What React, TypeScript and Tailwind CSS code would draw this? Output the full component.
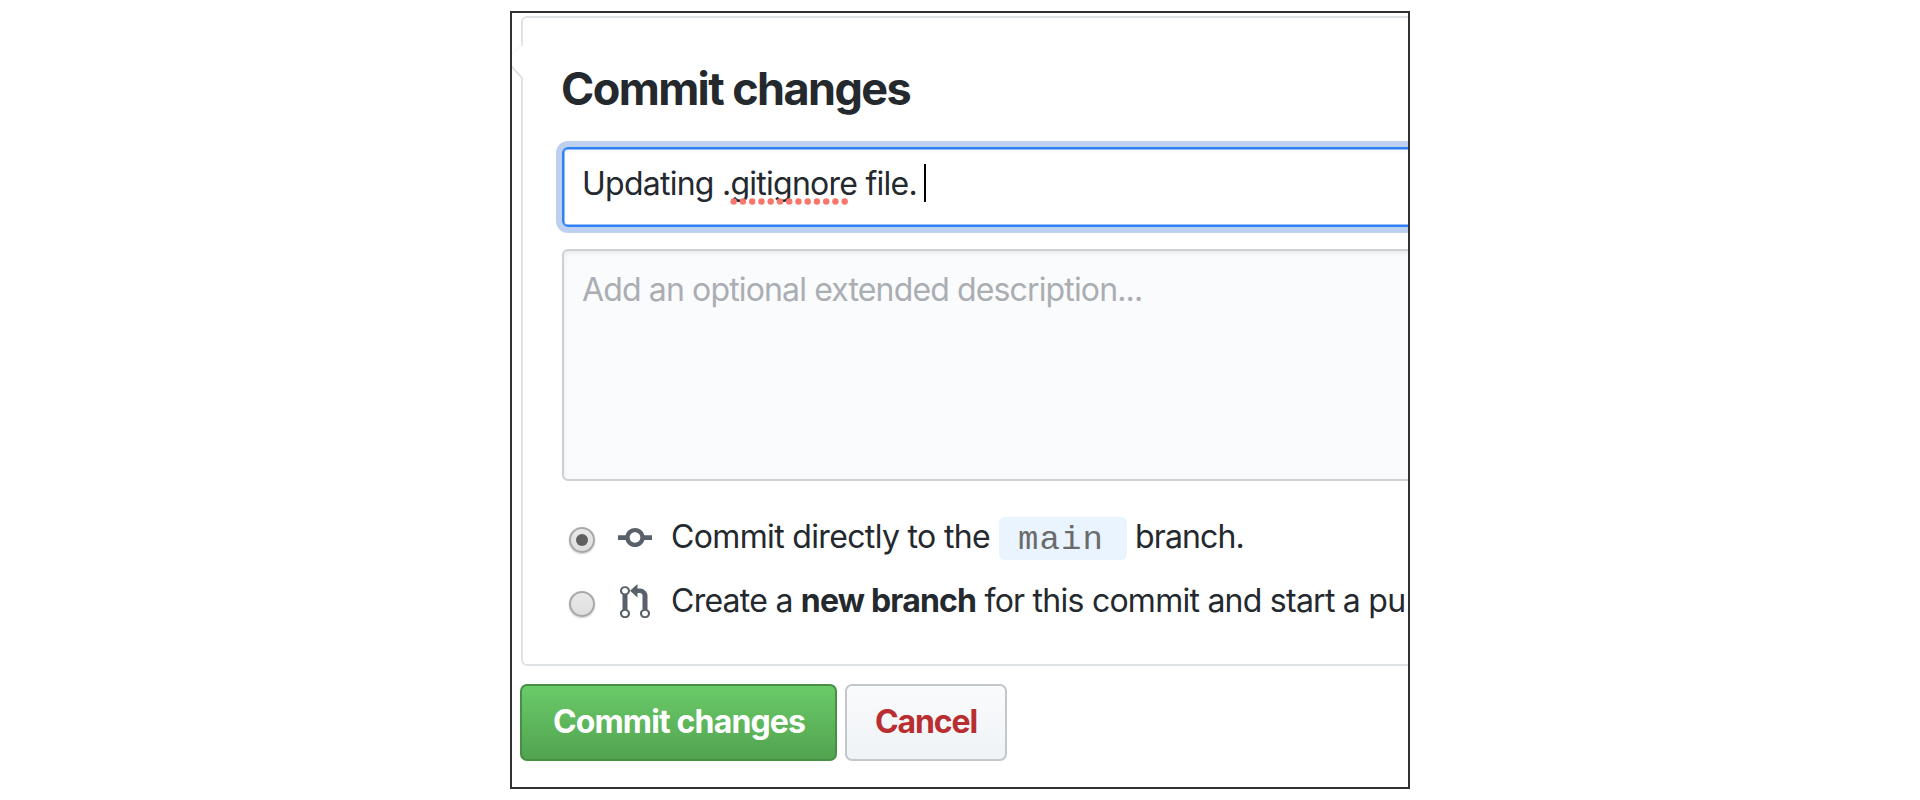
import React from "react";

function CommitIcon() {
  return (
    <svg className="block h-[19px] w-[34px]" viewBox="0 4 14 8" preserveAspectRatio="none" fill="#586069">
      <path d="M10.86 7c-.45-1.72-2-3-3.86-3-1.86 0-3.41 1.28-3.86 3H0v2h3.14c.45 1.72 2 3 3.86 3 1.86 0 3.41-1.28 3.86-3H14V7h-3.14zM7 10.2c-1.22 0-2.2-.98-2.2-2.2 0-1.22.98-2.2 2.2-2.2 1.22 0 2.2.98 2.2 2.2 0 1.22-.98 2.2-2.2 2.2z" />
    </svg>
  );
}

function PullRequestIcon() {
  return (
    <svg className="block h-[34px] w-[30px]" viewBox="0 0 12 15" preserveAspectRatio="none" fill="#586069">
      <path d="M11 11.28V5c-.03-.78-.34-1.47-.94-2.06C9.46 2.35 8.78 2.03 8 2H7V0L4 3l3 3V4h1c.27.02.48.11.69.31.21.2.3.42.31.69v6.28A1.993 1.993 0 0 0 10 15a1.993 1.993 0 0 0 1-3.72zm-1 2.92c-.66 0-1.2-.55-1.2-1.2 0-.65.55-1.2 1.2-1.2.65 0 1.2.55 1.2 1.2 0 .65-.55 1.2-1.2 1.2zM4 3c0-1.11-.89-2-2-2a1.993 1.993 0 0 0-1 3.72v6.56A1.993 1.993 0 0 0 2 15a1.993 1.993 0 0 0 1-3.72V4.72c.59-.34 1-.98 1-1.72zm-.8 10c0 .66-.55 1.2-1.2 1.2-.65 0-1.2-.55-1.2-1.2 0-.65.55-1.2 1.2-1.2.65 0 1.2.55 1.2 1.2zM2 4.2C1.34 4.2.8 3.65.8 3c0-.65.55-1.2 1.2-1.2.65 0 1.2.55 1.2 1.2 0 .65-.55 1.2-1.2 1.2z" />
    </svg>
  );
}

function Radio({ checked = false }: { checked?: boolean }) {
  return (
    <span className="mt-[10px] flex size-[26px] shrink-0 items-center justify-center rounded-full border-2 border-[#a8a8a8] bg-linear-to-b from-[#e9e9e9] to-[#dedede] shadow-[0_1px_2px_rgba(0,0,0,0.2)]">
      {checked && <span className="size-3 rounded-full bg-[#606060]" />}
    </span>
  );
}

function SpellingDots() {
  return (
    <svg className="absolute top-[34px] left-0 h-[7px] w-[120px]" viewBox="0 0 120 7" fill="#f8776c">
      {Array.from({ length: 13 }, (_, i) => (
        <circle key={i} cx={3.7 + i * 9.25} cy="3.5" r="3.2" />
      ))}
    </svg>
  );
}

export default function App() {
  return (
    <main className="flex h-[800px] justify-center overflow-hidden bg-white pt-[11px] font-['Inter',sans-serif] text-[#24292e]">
      <div className="relative h-[778px] w-[900px] overflow-hidden border-2 border-[#303234] bg-white">
        <section className="mt-[3px] ml-[9px] h-[650px] w-[940px] rounded-[6px] border-2 border-[#dfe2e5] pt-[44px] pl-[39px]">
          <h1 className="-ml-px h-[54px] text-[45px] leading-[54px] font-bold tracking-[-1.6px] whitespace-nowrap">
            Commit changes
          </h1>
          <div className="mt-[31px] flex h-[80px] items-start rounded-[6px] border-[2px] border-[#2f80f5] pt-[15px] pl-[18px] text-[32px] leading-[40px] tracking-[-0.75px] whitespace-pre shadow-[0_0_0_6px_#bdd0f0,inset_0_0_0_0.5px_#2f80f5,inset_0_2px_4px_rgba(27,31,35,0.05)]">
            <span>Updating .</span>
            <span className="relative">
              gitignore
              <SpellingDots />
            </span>
            <span> file. </span>
            <span className="-ml-px h-[38px] w-[2px] bg-black" />
          </div>
          <div className="mt-[22px] h-[232px] rounded-[6px] border-2 border-[#cdd0d5] bg-[#fafbfc] pt-[19px] pl-[18px] text-[32px] leading-[40px] tracking-[-0.86px] whitespace-nowrap text-[#aaaeb3] shadow-[inset_0_2px_4px_rgba(27,31,35,0.08)]">
            Add an optional extended description...
          </div>
          <div className="mt-[36px] flex h-[43px] items-start pl-[7px] whitespace-nowrap">
            <Radio checked />
            <div className="ml-[23px] w-[53px] shrink-0 pt-[11px]">
              <CommitIcon />
            </div>
            <span className="w-[328px] shrink-0 text-[32px] leading-[39px] tracking-[-0.65px]">Commit directly to the</span>
            <span className="h-[43px] w-[128px] shrink-0 rounded-[6px] bg-[#eaf4ff] pl-[19px] font-['Liberation_Mono',monospace] text-[34px] leading-[46px] tracking-[1.1px] text-[#6b6b6b]">
              main
            </span>
            <span className="ml-[8px] shrink-0 text-[32px] leading-[39px] tracking-[-0.85px]">branch.</span>
          </div>
          <div className="mt-[21px] flex h-[43px] items-start pl-[7px] whitespace-nowrap">
            <Radio />
            <div className="ml-[25px] w-[51px] shrink-0 pt-[3px]">
              <PullRequestIcon />
            </div>
            <span className="shrink-0 text-[32px] leading-[39px] tracking-[-0.75px]">
              Create a <b className="font-bold tracking-[-0.8px]">new branch</b> for this commit and start a pu
            </span>
          </div>
        </section>
        <svg className="absolute top-[31px] left-0 h-[34px] w-[12px]" viewBox="0 0 12 34">
          <path d="M12 0L0 12V23L10 34H12Z" fill="white" />
          <path d="M10 0L0 10" stroke="#f3f4f5" fill="none" />
          <path d="M-1 22L10 34" stroke="#dfe2e5" strokeWidth="2" fill="none" />
        </svg>
        <div className="mt-[18px] ml-[8px] flex gap-2">
          <button className="h-[77px] w-[317px] shrink-0 rounded-[7px] border-2 border-[#468f45] bg-linear-to-b from-[#6acb68] to-[#52a350] pb-[2px] pl-px text-[32px] font-bold tracking-[-0.85px] whitespace-nowrap text-white">
            Commit changes
          </button>
          <button className="h-[77px] w-[162px] shrink-0 rounded-[7px] border-2 border-[#c4c7ca] bg-linear-to-b from-[#fafbfc] to-[#eff3f6] pb-[2px] text-[32px] font-bold tracking-[-1.1px] whitespace-nowrap text-[#b92e31]">
            Cancel
          </button>
        </div>
      </div>
    </main>
  );
}
